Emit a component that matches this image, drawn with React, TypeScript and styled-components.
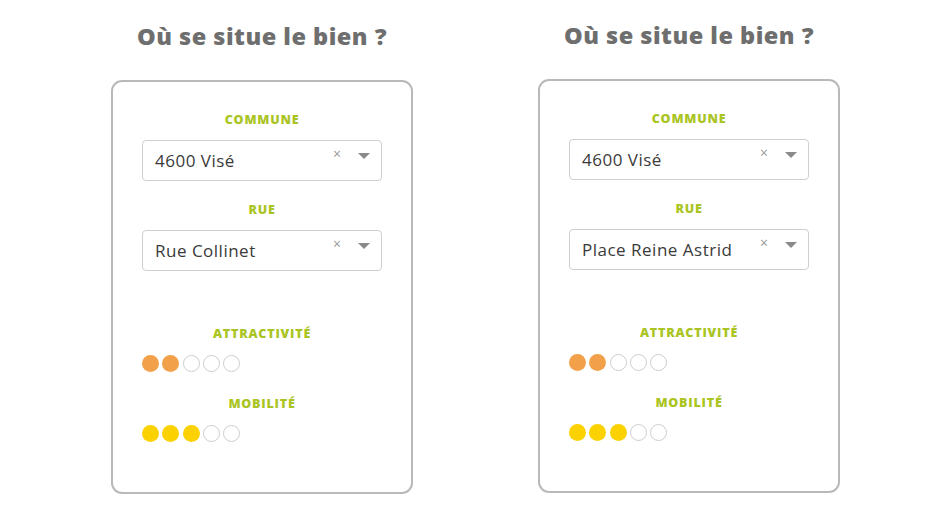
import React from 'react';
import styled, { createGlobalStyle } from 'styled-components';

const GlobalStyle = createGlobalStyle`
  html, body {
    margin: 0;
    padding: 0;
    background: #ffffff;
  }
  body {
    font-family: "Open Sans", "DejaVu Sans", sans-serif;
  }
`;

const Page = styled.div`
  display: flex;
  gap: 125px;
  padding-left: 111px;
  width: 930px;
  height: 522px;
  box-sizing: border-box;
`;

const Column = styled.div<{ $lift?: number }>`
  display: flex;
  flex-direction: column;
  align-items: center;
  width: 302px;
  margin-top: ${p => -(p.$lift || 0)}px;
`;

const Title = styled.h1`
  margin: 20px 0 0;
  height: 32px;
  line-height: 32px;
  font-size: 23.5px;
  font-weight: 800;
  color: #6e6e6e;
  letter-spacing: 0.5px;
  white-space: nowrap;
`;

const Card = styled.div`
  margin-top: 28px;
  width: 302px;
  height: 414px;
  box-sizing: border-box;
  border: 2px solid #b9b9b9;
  border-radius: 11px;
  padding: 31px 29px 0;
  display: flex;
  flex-direction: column;
`;

const Label = styled.div<{ $gap?: number }>`
  margin-top: ${p => p.$gap || 0}px;
  text-align: center;
  font-size: 12.5px;
  line-height: 14px;
  font-weight: 800;
  color: #a9c423;
  text-transform: uppercase;
  letter-spacing: 0.8px;
`;

const Select = styled.div`
  margin-top: 13px;
  height: 41px;
  box-sizing: border-box;
  border: 1px solid #cfcfcf;
  border-radius: 4px;
  display: flex;
  align-items: center;
  padding: 0 11px 0 12px;
`;

const Value = styled.span`
  flex: 1;
  font-size: 17px;
  letter-spacing: 0.5px;
  color: #3a3a3a;
  white-space: nowrap;
`;

const Clear = styled.span`
  align-self: flex-start;
  margin-top: 6px;
  font-size: 14px;
  line-height: 14px;
  color: #9a9a9a;
  width: 10px;
  text-align: center;
`;

const Caret = styled.span`
  align-self: flex-start;
  margin-top: 12px;
  margin-left: 16px;
  width: 0;
  height: 0;
  border-left: 6.5px solid transparent;
  border-right: 6.5px solid transparent;
  border-top: 6px solid #8a8a8a;
`;

const Dots = styled.div<{ $gap: number }>`
  margin-top: ${p => p.$gap}px;
  display: flex;
  gap: 3.3px;
`;

const Dot = styled.span<{ $color?: string }>`
  width: 17px;
  height: 17px;
  box-sizing: border-box;
  border-radius: 50%;
  background: ${p => p.$color || 'transparent'};
  border: ${p => (p.$color ? 'none' : '1.5px solid #cdcdcd')};
`;

type PanelProps = {
  commune: string;
  rue: string;
  attractivite: number;
  mobilite: number;
  lift?: number;
};

const Rating = ({ value, color, gap }: { value: number; color: string; gap: number }) => (
  <Dots $gap={gap}>
    {[0, 1, 2, 3, 4].map(i => (
      <Dot key={i} $color={i < value ? color : undefined} />
    ))}
  </Dots>
);

const Field = ({ value }: { value: string }) => (
  <Select>
    <Value>{value}</Value>
    <Clear>×</Clear>
    <Caret />
  </Select>
);

const Panel = ({ commune, rue, attractivite, mobilite, lift }: PanelProps) => (
  <Column $lift={lift}>
    <Title>Où se situe le bien ?</Title>
    <Card>
      <Label>Commune</Label>
      <Field value={commune} />
      <Label $gap={22}>Rue</Label>
      <Field value={rue} />
      <Label $gap={56}>Attractivité</Label>
      <Rating value={attractivite} color="#f2a14a" gap={14} />
      <Label $gap={25}>Mobilité</Label>
      <Rating value={mobilite} color="#fbd200" gap={14} />
    </Card>
  </Column>
);

const App: React.FC = () => (
  <>
    <GlobalStyle />
    <Page>
      <Panel commune="4600 Visé" rue="Rue Collinet" attractivite={2} mobilite={3} />
      <Panel commune="4600 Visé" rue="Place Reine Astrid" attractivite={2} mobilite={3} lift={1} />
    </Page>
  </>
);

export default App;
